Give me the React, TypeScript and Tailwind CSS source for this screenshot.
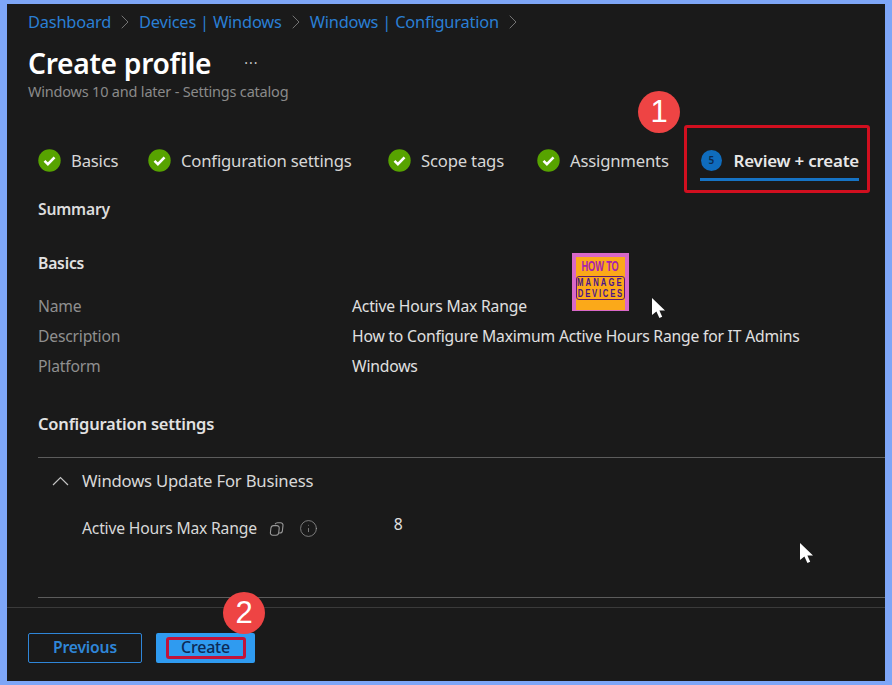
import { ChevronRight, Info } from "lucide-react";

function DoneIcon() {
  return (
    <svg width="23" height="23" viewBox="0 0 23 23" className="shrink-0">
      <circle cx="11.5" cy="11.5" r="11.2" fill="#57a300" />
      <path d="M6.5 11.8l3.4 3.4 6.6-6.8" fill="none" stroke="#fff" strokeWidth="2.6" />
    </svg>
  );
}

function Cursor({ className }: { className: string }) {
  return (
    <svg width="16" height="23" viewBox="0 0 16 23" className={className}>
      <path d="M1 1v17l4.4-3.6 3 6.6 2.8-1.2-2.8-6.4h5.6z" fill="#fff" />
    </svg>
  );
}

function Badge({ n, className }: { n: string; className: string }) {
  return (
    <div className={`absolute flex h-[42px] w-[42px] items-center justify-center rounded-full bg-[#ee4444] font-['Liberation_Sans',sans-serif] text-[31px] text-white ${className}`}>
      {n}
    </div>
  );
}

function Step({ label, className }: { label: string; className: string }) {
  return (
    <div className={`flex items-center gap-[10px] ${className}`}>
      <DoneIcon />
      <span className="text-[16.7px] text-[#d6d6d6]">{label}</span>
    </div>
  );
}

function Row({ name, value }: { name: string; value: string }) {
  return (
    <div className="flex h-[30px] items-center">
      <span className="w-[314px] text-[#8f8f8f]">{name}</span>
      <span className="text-[#e0e0e0]">{value}</span>
    </div>
  );
}

function Crumb() {
  return <ChevronRight size={24} strokeWidth={0.8} className="mx-[2px] text-[#8a8a8a]" />;
}

export default function App() {
  return (
    <div className="h-[685px] w-[892px] overflow-hidden bg-[#7ea6f7] px-[7px] pb-[4px] pt-[4px] font-['Noto_Sans',sans-serif] text-[15.7px] tracking-[-0.2px]">
      <div className="relative flex h-full flex-col bg-[#1a1a1a]">
        <div className="pl-[21px] pt-[7px]">
          <div className="flex h-[22px] items-center text-[16.4px] text-[#2a7fd4]">
            <span>Dashboard</span>
            <Crumb />
            <span>Devices | Windows</span>
            <Crumb />
            <span>Windows | Configuration</span>
            <Crumb />
          </div>
          <div className="mt-[11px] flex h-[38px] items-center">
            <h1 className="text-[28.2px] font-semibold tracking-[-0.3px] text-white">Create profile</h1>
            <span className="ml-[33px] text-[14px] leading-none tracking-[1px] text-[#c8c8c8]">···</span>
          </div>
          <div className="-mt-[1px] text-[14.5px] text-[#8a8a8a]">Windows 10 and later - Settings catalog</div>
        </div>

        <div className="mt-[38px] flex h-[40px] items-center pl-[31px]">
          <Step label="Basics" className="w-[110px]" />
          <Step label="Configuration settings" className="w-[240px]" />
          <Step label="Scope tags" className="w-[149px]" />
          <Step label="Assignments" className="w-[163px]" />
          <div className="flex h-[40px] w-[159px] items-center gap-[12px] border-b-[3px] border-[#1673c4] pl-[1px] pt-[3px]">
            <div className="flex h-[21px] w-[21px] items-center justify-center rounded-full bg-[#0f6cbd] text-[10px] font-semibold text-[#0b2a4d]">5</div>
            <span className="whitespace-nowrap text-[16.9px] font-semibold text-[#e8e8e8]">Review + create</span>
          </div>
        </div>

        <div className="mt-[17px] pl-[31px] font-semibold text-[#dcdcdc]">Summary</div>
        <div className="mt-[31px] pl-[31px] font-semibold text-[#e2e2e2]">Basics</div>
        <div className="mt-[16px] pl-[31px]">
          <Row name="Name" value="Active Hours Max Range" />
          <Row name="Description" value="How to Configure Maximum Active Hours Range for IT Admins" />
          <Row name="Platform" value="Windows" />
        </div>
        <div className="mt-[30px] pl-[31px] text-[16.5px] font-semibold text-[#e2e2e2]">Configuration settings</div>

        <div className="ml-[31px] mt-[20px] border-t border-[#5c5c5c]">
          <div className="flex h-[46px] items-center pl-[14px] text-[#d8d8d8]">
            <svg width="17" height="10" viewBox="0 0 17 10" fill="none" stroke="#c4c4c4" strokeWidth="1.2" className="mr-[13px]">
              <path d="M1 9l7.5-7.5L16 9" />
            </svg>
            <span className="text-[16.7px]">Windows Update For Business</span>
          </div>
          <div className="flex h-[50px] items-center pl-[44px] text-[#d8d8d8]">
            <span>Active Hours Max Range</span>
            <svg width="16" height="16" viewBox="0 0 16 16" fill="none" stroke="#9a9a9a" strokeWidth="1.1" className="ml-[12px]">
              <path d="M6 3.2c.6-1 1.5-1.4 2.6-1.4h3c1.5 0 2.6 1.1 2.4 2.6l-.6 5.4c-.2 1.3-1.2 2.2-2.5 2.2h-1" />
              <path d="M4.6 4.6h3.2c1.6 0 2.6 1.1 2.4 2.6l-.5 4.6c-.2 1.5-1.3 2.4-2.7 2.4H3.8c-1.5 0-2.6-1.1-2.4-2.6l.5-4.4c.2-1.5 1.3-2.6 2.7-2.6z" />
            </svg>
            <Info size={19} strokeWidth={0.9} className="ml-[14px] text-[#a0a0a0]" />
            <span className="ml-[76px] -mt-[8px] text-[#e0e0e0]">8</span>
          </div>
        </div>

        <div className="ml-[31px] mt-[43px] border-t border-[#5c5c5c]" />
        <div className="mt-[9px] flex-1 border-t border-[#3a3a3a] pl-[21px] pt-[25px]">
          <div className="flex gap-[14px]">
            <button className="h-[30px] w-[114px] rounded-[2px] border border-[#2f86d8] font-semibold text-[#2f86d8]">Previous</button>
            <button className="h-[30px] w-[99px] rounded-[2px] bg-[#2f9bf0] pb-[2px] text-[16px] font-medium text-[#0d2a55]">Create</button>
          </div>
        </div>

        {/* annotations on top of the page */}
        <Badge n="1" className="left-[631px] top-[87px]" />
        <Badge n="2" className="left-[216px] top-[588px]" />
        <div className="absolute left-[677px] top-[121px] h-[68px] w-[186px] rounded-[3px] border-[3px] border-[#d10f1f]" />
        <div className="absolute left-[159px] top-[633px] h-[22px] w-[80px] rounded-[3px] border-[3px] border-[#c2143a]" />
        <div className="absolute left-[565px] top-[249px] flex h-[58px] w-[57px] flex-col items-center border-[4px] border-b-[1px] border-[#d868c8] bg-[#fba919] pt-[2px] font-['Liberation_Sans',sans-serif] font-bold leading-none">
          <span className="scale-x-[0.66] whitespace-nowrap text-[14px] text-[#a81fb0]">HOW TO</span>
          <div className="mt-[3px] flex h-[24px] w-[49px] shrink-0 flex-col items-center justify-center rounded-[3px] border border-[#5d1a6e] text-[11px] leading-[11px] text-[#4a148c]">
            <span className="scale-x-[0.7] whitespace-nowrap tracking-[3px]">MANAGE</span>
            <span className="scale-x-[0.7] whitespace-nowrap tracking-[2.5px]">DEVICES</span>
          </div>
        </div>
        <Cursor className="absolute left-[644px] top-[293px]" />
        <Cursor className="absolute left-[792px] top-[538px]" />
      </div>
    </div>
  );
}
